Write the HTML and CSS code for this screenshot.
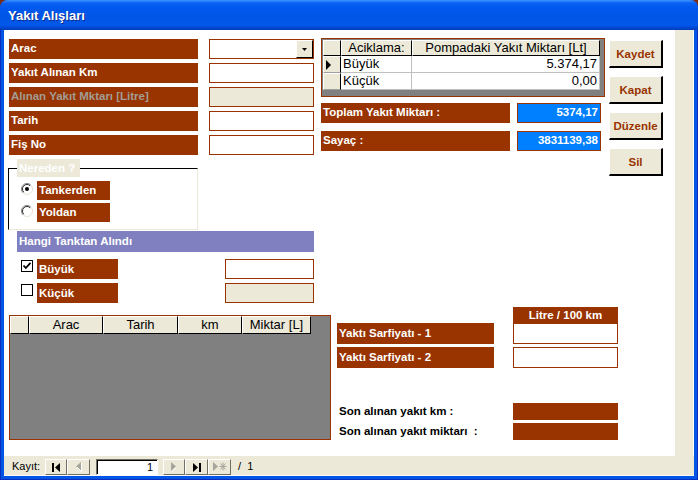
FILE: index.html
```html
<!DOCTYPE html>
<html lang="tr">
<head>
<meta charset="utf-8">
<title>Yakıt Alışları</title>
<link rel="stylesheet" href="styles.css">
</head>
<body>
<div class="window">
  <div class="titlebar"><span class="title">Yakıt Alışları</span></div>
  <div class="frame">
    <div class="client">
      <div class="main">
        <div class="form">
          <div class="top">
            <div class="leftcol">
              <div class="field"><div class="lbl">Arac</div><div class="combo"><span class="combo-btn"><svg width="5" height="3" viewBox="0 0 5 3"><polygon points="0,0 5,0 2.5,3" fill="#000"/></svg></span></div></div>
              <div class="field"><div class="lbl">Yakıt Alınan Km</div><div class="txt"></div></div>
              <div class="field"><div class="lbl lbl-dis">Alınan Yakıt Mktarı [Litre]</div><div class="txt txt-dis"></div></div>
              <div class="field"><div class="lbl">Tarih</div><div class="txt"></div></div>
              <div class="field"><div class="lbl">Fiş No</div><div class="txt"></div></div>
              <fieldset class="group">
                <legend>Nereden ?</legend>
                <div class="opt">
                  <svg class="radio" width="12" height="12" viewBox="0 0 12 12"><circle cx="6" cy="6" r="5.5" fill="#fff"/><path d="M2.1,9.9 A5.5,5.5 0 0 1 9.9,2.1" fill="none" stroke="#808080"/><path d="M9.9,2.1 A5.5,5.5 0 0 1 2.1,9.9" fill="none" stroke="#e6e3d6"/><path d="M2.8,9.2 A4.5,4.5 0 0 1 9.2,2.8" fill="none" stroke="#303030"/><circle cx="6" cy="6" r="2" fill="#000"/></svg>
                  <span class="optlbl">Tankerden</span>
                </div>
                <div class="opt">
                  <svg class="radio" width="12" height="12" viewBox="0 0 12 12"><circle cx="6" cy="6" r="5.5" fill="#fff"/><path d="M2.1,9.9 A5.5,5.5 0 0 1 9.9,2.1" fill="none" stroke="#808080"/><path d="M9.9,2.1 A5.5,5.5 0 0 1 2.1,9.9" fill="none" stroke="#e6e3d6"/><path d="M2.8,9.2 A4.5,4.5 0 0 1 9.2,2.8" fill="none" stroke="#303030"/></svg>
                  <span class="optlbl">Yoldan</span>
                </div>
              </fieldset>
              <div class="section">Hangi Tanktan Alındı</div>
              <div class="chkrow">
                <span class="chk"><svg width="10" height="10" viewBox="0 0 10 10"><path d="M1.5,4.5 L3.8,7 L8.5,1.8" fill="none" stroke="#000" stroke-width="1.8"/></svg></span>
                <span class="chklbl">Büyük</span>
                <span class="txt chktxt"></span>
              </div>
              <div class="chkrow">
                <span class="chk"></span>
                <span class="chklbl">Küçük</span>
                <span class="txt txt-dis chktxt"></span>
              </div>
            </div>
            <div class="midcol">
              <div class="dgrid">
                <div class="dg">
                  <div class="hcell"></div>
                  <div class="hcell">Aciklama:</div>
                  <div class="hcell">Pompadaki Yakıt Miktarı [Lt]</div>
                  <div class="sel"><svg width="5" height="10" viewBox="0 0 5 10"><polygon points="0,0 5,5 0,10" fill="#000"/></svg></div>
                  <div class="dcell">Büyük</div>
                  <div class="dcell num">5.374,17</div>
                  <div class="sel"></div>
                  <div class="dcell">Küçük</div>
                  <div class="dcell num">0,00</div>
                </div>
              </div>
              <div class="total"><div class="tlbl">Toplam Yakıt Miktarı :</div><div class="tval">5374,17</div></div>
              <div class="total total2"><div class="tlbl">Sayaç :</div><div class="tval">3831139,38</div></div>
            </div>
            <div class="btncol">
              <button class="btn">Kaydet</button>
              <button class="btn">Kapat</button>
              <button class="btn">Düzenle</button>
              <button class="btn">Sil</button>
            </div>
          </div>
          <div class="bottom">
            <div class="list">
              <div class="lhead">
                <div class="lh"></div>
                <div class="lh">Arac</div>
                <div class="lh">Tarih</div>
                <div class="lh">km</div>
                <div class="lh">Miktar [L]</div>
              </div>
            </div>
            <div class="rpanel">
              <div class="rphead">Litre / 100 km</div>
              <div class="rprow"><div class="rplbl">Yaktı Sarfiyatı - 1</div><div class="txt rptxt"></div></div>
              <div class="rprow rprow2"><div class="rplbl">Yaktı Sarfiyatı - 2</div><div class="txt rptxt"></div></div>
              <div class="son son1"><div class="sontxt">Son alınan yakıt km :</div><div class="sonbox"></div></div>
              <div class="son"><div class="sontxt">Son alınan yakıt miktarı &nbsp;:</div><div class="sonbox"></div></div>
            </div>
          </div>
        </div>
        <div class="vstrip"></div>
      </div>
      <div class="navbar">
        <span class="navlbl">Kayıt:</span>
        <span class="nb nb1"><svg width="8" height="9" viewBox="0 0 8 9"><rect x="0" y="0" width="2" height="9" fill="#000"/><polygon points="8,0 3,4.5 8,9" fill="#000"/></svg></span>
        <span class="nb nb2"><svg width="6" height="10" viewBox="0 0 6 10"><polygon points="5,0 0,4.5 5,9" fill="#a7a69c"/><polyline points="5.5,1 5.5,9.5 1,5" fill="none" stroke="#fff"/></svg></span>
        <span class="navin">1</span>
        <span class="nb nb3"><svg width="6" height="10" viewBox="0 0 6 10"><polygon points="0,0 5,4.5 0,9" fill="#a7a69c"/><polyline points="0.5,9.5 5.5,5" fill="none" stroke="#fff"/></svg></span>
        <span class="nb nb4"><svg width="8" height="9" viewBox="0 0 8 9"><polygon points="0,0 5,4.5 0,9" fill="#000"/><rect x="6" y="0" width="2" height="9" fill="#000"/></svg></span>
        <span class="nb nb5"><svg width="14" height="10" viewBox="0 0 14 10"><polygon points="0,0 5,4.5 0,9" fill="#a7a69c"/><path d="M10,0.5 V8.5 M6.5,4.5 H13.5 M7.5,1.5 L12.5,7.5 M12.5,1.5 L7.5,7.5" stroke="#a7a69c" stroke-width="1"/></svg></span>
        <span class="navof">/ &nbsp;1</span>
      </div>
    </div>
  </div>
</div>
</body>
</html>
```

FILE: styles.css
```css
* { box-sizing: border-box; }
html, body { margin: 0; padding: 0; }
html { background: #7a2c14; }
body {
  width: 698px;
  height: 480px;
  overflow: hidden;
  font-family: "Liberation Sans", Arial, sans-serif;
}

.window {
  width: 698px;
  height: 480px;
  display: flex;
  flex-direction: column;
  border-radius: 8px 8px 0 0;
  overflow: hidden;
  background: #0055e5;
}

.titlebar {
  height: 30px;
  flex: none;
  display: flex;
  align-items: center;
  padding-left: 8px;
  padding-top: 1px;
  background: linear-gradient(to bottom, #3d95ff 0px, #0a62f5 3px, #0058ee 8px, #0055e5 18px, #0258ea 25px, #0046cf 28px, #003bb6 30px);
}
.title {
  color: #fff;
  font-weight: bold;
  font-size: 13px;
  text-shadow: 1px 1px 0 #0b2a8c;
}

.frame {
  flex: 1;
  display: flex;
  padding: 0 4px 4px 4px;
  background: #0055e5;
  box-shadow: inset 1px 0 0 #0a2fc0, inset -1px 0 0 #0a2fc0, inset 0 -1px 0 #0a2fc0;
}
.client {
  flex: 1;
  display: flex;
  flex-direction: column;
  background: #ece9d8;
}
.main {
  flex: 1;
  display: flex;
}
.form {
  width: 671px;
  background: #fff;
  padding: 8px 0 0 5px;
}
.vstrip {
  flex: 1;
  background: #ece9d8;
  border-right: 1px solid #fbfbf8;
}

/* top section */
.top { display: flex; }
.leftcol {
  width: 305px;
  margin-top: 1px;
  display: flex;
  flex-direction: column;
}
.field {
  display: flex;
  height: 20px;
  gap: 11px;
}
.field + .field { margin-top: 4px; }

.lbl, .optlbl, .chklbl, .tlbl, .rplbl {
  background: #993300;
  color: #fff;
  font-weight: bold;
  font-size: 11.5px;
  white-space: nowrap;
  padding-left: 2px;
}
.lbl {
  width: 189px;
  line-height: 19px;
}
.lbl-dis { color: #a29d95; }

.txt {
  display: block;
  width: 105px;
  background: #fff;
  border: 1px solid #993300;
}
.txt-dis { background: #ece9d8; }

.combo {
  width: 105px;
  border: 1px solid #993300;
  display: flex;
  justify-content: flex-end;
  align-items: stretch;
  background: #fff;
}
.combo-btn {
  width: 17px;
  display: flex;
  align-items: center;
  justify-content: center;
  background: #ece9d8;
  border-style: solid;
  border-width: 1px;
  border-color: #fff #000 #000 #fff;
}

/* option group */
.group {
  margin: 4px 0 0 -1px;
  width: 190px;
  border: 1px solid;
  border-color: #000 #ece9d8 #ece9d8 #000;
  padding: 4px 0 7px 0;
}
.group legend {
  margin-left: 8px;
  padding: 0 5px 0 2px;
  height: 18px;
  line-height: 18px;
  background: #ece9d8;
  color: #fff;
  font-weight: bold;
  font-size: 11.5px;
}
.opt {
  display: flex;
  align-items: flex-start;
  height: 19px;
  margin-left: 12px;
}
.opt + .opt { margin-top: 3px; }
.radio {
  margin-top: 2px;
  margin-right: 4px;
  flex: none;
}
.optlbl {
  width: 73px;
  height: 19px;
  line-height: 18px;
}

.section {
  margin: 1px 0 0 8px;
  width: 297px;
  height: 21px;
  line-height: 21px;
  padding-left: 2px;
  background: #8080c0;
  color: #fff;
  font-weight: bold;
  font-size: 11.5px;
}
.chkrow {
  display: flex;
  height: 20px;
  margin-top: 4px;
}
.section + .chkrow { margin-top: 7px; }
.chk {
  width: 12px;
  height: 12px;
  margin: 1px 4px 0 12px;
  border: 1px solid #000;
  background: #fff;
  display: flex;
  align-items: center;
  justify-content: center;
}
.chklbl {
  width: 81px;
  line-height: 20px;
}
.chktxt {
  width: 89px;
  margin-left: auto;
}

/* middle column */
.midcol {
  width: 284px;
  margin-left: 7px;
}
.dgrid {
  border: 1px solid #993300;
  background: #808080;
  padding: 1px 4px 6px 1px;
}
.dg {
  display: grid;
  grid-template-columns: 18px 71px 188px;
  grid-template-rows: 16px 17px 17px;
  font-size: 13px;
}
.hcell {
  background: #ece9d8;
  border-style: solid;
  border-width: 1px;
  border-color: #fff #000 #000 #fff;
  text-align: center;
  line-height: 14px;
  white-space: nowrap;
}
.sel {
  background: #ece9d8;
  border-style: solid;
  border-width: 1px;
  border-color: #fff #000 #a0a0a0 #fff;
  display: flex;
  align-items: center;
  padding-left: 2px;
}
.dcell {
  background: #fff;
  border-right: 1px solid #c0c0c0;
  border-bottom: 1px solid #c0c0c0;
  padding: 0 2px;
  line-height: 16px;
  white-space: nowrap;
}
.num { text-align: right; }

.total {
  display: flex;
  gap: 7px;
  height: 20px;
  margin-top: 6px;
}
.total2 { margin-top: 8px; }
.tlbl {
  width: 189px;
  line-height: 19px;
}
.tval {
  width: 84px;
  border: 1px solid #993300;
  background: #0080ff;
  color: #fff;
  font-weight: bold;
  font-size: 11.5px;
  text-align: right;
  padding-right: 2px;
  line-height: 17px;
}

/* buttons */
.btncol {
  margin-left: 4px;
  margin-top: 2px;
  display: flex;
  flex-direction: column;
  gap: 8px;
}
.btn {
  width: 54px;
  height: 28px;
  padding: 0;
  background: #ece9d8;
  border-style: solid;
  border-width: 1px 2px 2px 1px;
  border-color: #fff #000 #000 #fff;
  color: #993300;
  font-family: "Liberation Sans", Arial, sans-serif;
  font-weight: bold;
  font-size: 11.5px;
}

/* bottom */
.bottom {
  display: flex;
  margin-top: 4px;
}
.list {
  margin-top: 8px;
  width: 322px;
  height: 125px;
  border: 1px solid #993300;
  background: #808080;
}
.lhead {
  display: grid;
  grid-template-columns: 19px 74px 75px 64px 69px;
  height: 18px;
}
.lh {
  background: #ece9d8;
  border-style: solid;
  border-width: 1px 1px 1px 1px;
  border-color: #fff #000 #000 #fff;
  text-align: center;
  font-size: 13px;
  line-height: 15px;
  white-space: nowrap;
}

.rpanel {
  margin-left: 6px;
  width: 282px;
}
.rphead {
  margin-left: 176px;
  width: 105px;
  height: 16px;
  line-height: 16px;
  background: #993300;
  color: #fff;
  font-weight: bold;
  font-size: 11.5px;
  text-align: center;
}
.rprow {
  display: flex;
  height: 21px;
}
.rprow2 { margin-top: 3px; }
.rplbl {
  width: 157px;
  line-height: 21px;
}
.rptxt {
  margin-left: 19px;
}
.son {
  display: flex;
  height: 17px;
  margin-top: 3px;
}
.son1 { margin-top: 35px; }
.sontxt {
  width: 176px;
  padding-left: 2px;
  font-weight: bold;
  font-size: 11.5px;
  line-height: 17px;
  color: #000;
  white-space: nowrap;
}
.sonbox {
  width: 105px;
  background: #993300;
}

/* navigation bar */
.navbar {
  height: 20px;
  flex: none;
  display: flex;
  align-items: flex-start;
  padding: 3px 0 0 8px;
  border-bottom: 1px solid #fbfbf8;
  font-size: 11px;
  color: #000;
}
.navlbl {
  width: 33px;
  line-height: 15px;
}
.nb {
  height: 16px;
  display: flex;
  align-items: center;
  justify-content: center;
  background: #ece9d8;
  border-style: solid;
  border-width: 1px;
  border-color: #fff #716f64 #716f64 #fff;
}
.nb1 { width: 22px; }
.nb2 { width: 23px; }
.nb3 { width: 22px; margin-left: 5px; }
.nb4 { width: 23px; }
.nb5 { width: 23px; }
.navin {
  width: 62px;
  height: 16px;
  margin-left: 6px;
  background: #fff;
  border-style: solid;
  border-width: 1px;
  border-color: #716f64 #fff #fff #716f64;
  box-shadow: inset 1px 1px 0 #000;
  text-align: right;
  padding-right: 4px;
  line-height: 14px;
}
.navof {
  margin-left: 7px;
  line-height: 15px;
}
```
